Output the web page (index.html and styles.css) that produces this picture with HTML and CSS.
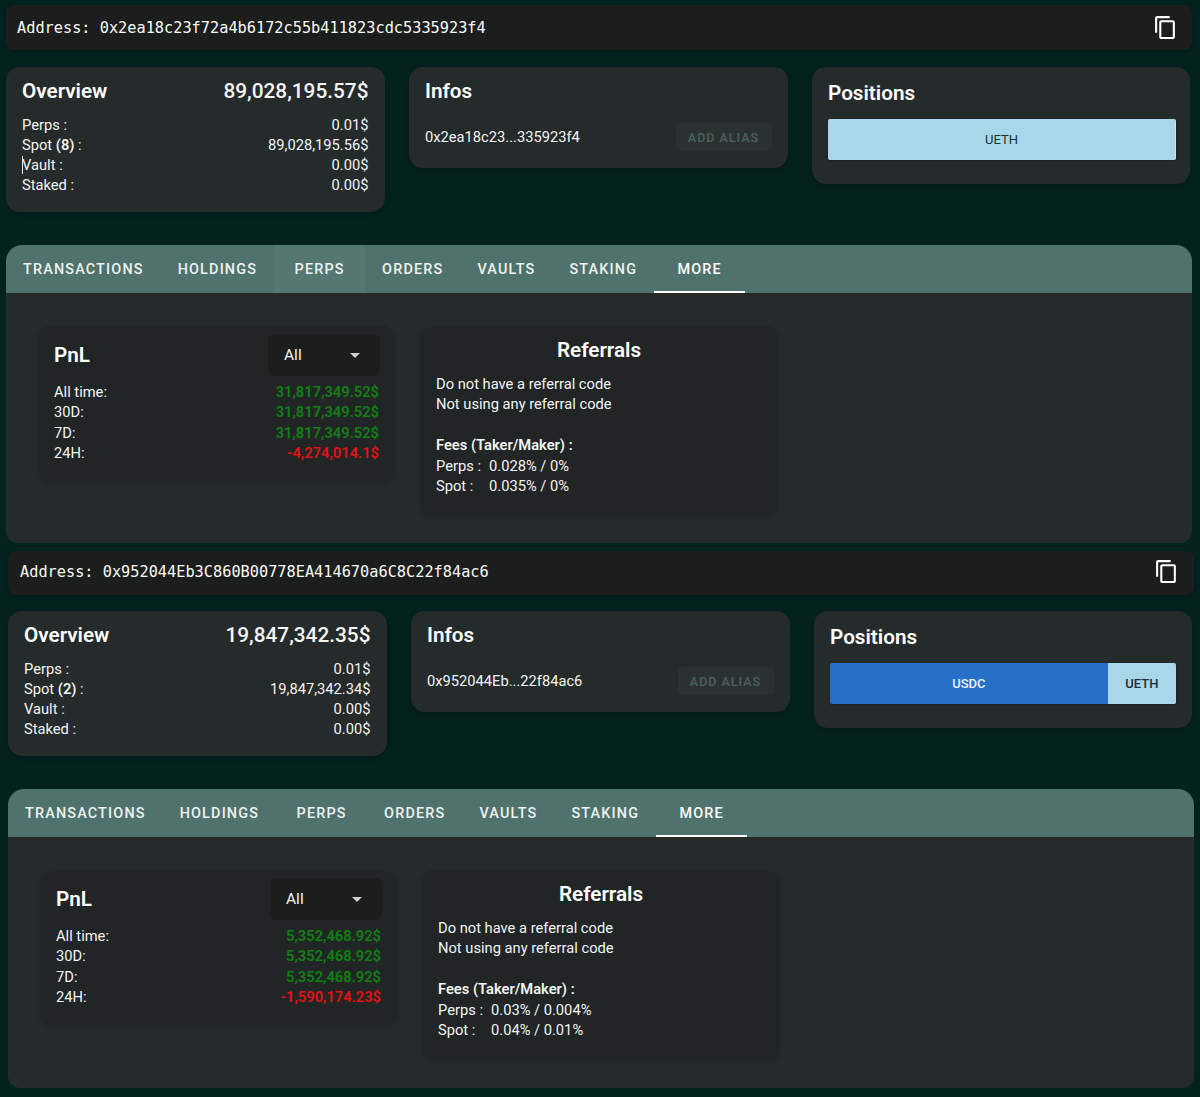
FILE: index.html
```html
<!DOCTYPE html>
<html lang="en">
<head>
<meta charset="utf-8">
<title>Wallet overview</title>
<link rel="stylesheet" href="styles.css">
</head>
<body>
<section class="wallet wallet-a">
  <div class="address">
    <span class="address-text">Address: 0x2ea18c23f72a4b6172c55b411823cdc5335923f4</span>
    <svg class="copy" viewBox="0 0 24 24"><path d="M16 1H4c-1.1 0-2 .9-2 2v14h2V3h12V1zm3 4H8c-1.1 0-2 .9-2 2v14c0 1.1.9 2 2 2h11c1.1 0 2-.9 2-2V7c0-1.1-.9-2-2-2zm0 16H8V7h11v14z"/></svg>
  </div>
  <div class="cards">
    <div class="card overview">
      <div class="head"><h2>Overview</h2><span class="total">89,028,195.57$</span></div>
      <div class="row"><span>Perps :</span><span>0.01$</span></div>
      <div class="row"><span>Spot <b>(8)</b> :</span><span>89,028,195.56$</span></div>
      <div class="row"><span><i class="caret"></i>Vault :</span><span>0.00$</span></div>
      <div class="row"><span>Staked :</span><span>0.00$</span></div>
    </div>
    <div class="card infos">
      <div class="head"><h2>Infos</h2></div>
      <div class="info-row"><span>0x2ea18c23...335923f4</span><button class="alias" disabled>ADD ALIAS</button></div>
    </div>
    <div class="card positions">
      <div class="head"><h2>Positions</h2></div>
      <div class="bar"><div class="seg ueth" style="flex:1">UETH</div><div class="seg sliver" style="width:1px"></div></div>
    </div>
  </div>
  <nav class="tabs">
    <a class="tab">Transactions</a><a class="tab">Holdings</a><a class="tab hover">Perps</a><a class="tab">Orders</a><a class="tab">Vaults</a><a class="tab">Staking</a><a class="tab active">More</a>
  </nav>
  <div class="panel">
    <div class="inner pnl">
      <div class="pnl-head"><h2>PnL</h2><div class="select"><span>All</span><i class="arrow"></i></div></div>
      <div class="line"><span>All time:</span><span class="gain">31,817,349.52$</span></div>
      <div class="line"><span>30D:</span><span class="gain">31,817,349.52$</span></div>
      <div class="line"><span>7D:</span><span class="gain">31,817,349.52$</span></div>
      <div class="line"><span>24H:</span><span class="loss">-4,274,014.1$</span></div>
    </div>
    <div class="inner referrals">
      <h2>Referrals</h2>
      <p class="line">Do not have a referral code</p>
      <p class="line">Not using any referral code</p>
      <p class="line blank"></p>
      <p class="line"><b>Fees (Taker/Maker) :</b></p>
      <p class="line"><span class="fee-label">Perps :</span>0.028% / 0%</p>
      <p class="line"><span class="fee-label">Spot :</span>0.035% / 0%</p>
    </div>
  </div>
</section>
<section class="wallet wallet-b">
  <div class="address">
    <span class="address-text">Address: 0x952044Eb3C860B00778EA414670a6C8C22f84ac6</span>
    <svg class="copy" viewBox="0 0 24 24"><path d="M16 1H4c-1.1 0-2 .9-2 2v14h2V3h12V1zm3 4H8c-1.1 0-2 .9-2 2v14c0 1.1.9 2 2 2h11c1.1 0 2-.9 2-2V7c0-1.1-.9-2-2-2zm0 16H8V7h11v14z"/></svg>
  </div>
  <div class="cards">
    <div class="card overview">
      <div class="head"><h2>Overview</h2><span class="total">19,847,342.35$</span></div>
      <div class="row"><span>Perps :</span><span>0.01$</span></div>
      <div class="row"><span>Spot <b>(2)</b> :</span><span>19,847,342.34$</span></div>
      <div class="row"><span>Vault :</span><span>0.00$</span></div>
      <div class="row"><span>Staked :</span><span>0.00$</span></div>
    </div>
    <div class="card infos">
      <div class="head"><h2>Infos</h2></div>
      <div class="info-row"><span>0x952044Eb...22f84ac6</span><button class="alias" disabled>ADD ALIAS</button></div>
    </div>
    <div class="card positions">
      <div class="head"><h2>Positions</h2></div>
      <div class="bar"><div class="seg usdc" style="flex:277">USDC</div><div class="seg ueth" style="flex:68">UETH</div></div>
    </div>
  </div>
  <nav class="tabs">
    <a class="tab">Transactions</a><a class="tab">Holdings</a><a class="tab">Perps</a><a class="tab">Orders</a><a class="tab">Vaults</a><a class="tab">Staking</a><a class="tab active">More</a>
  </nav>
  <div class="panel">
    <div class="inner pnl">
      <div class="pnl-head"><h2>PnL</h2><div class="select"><span>All</span><i class="arrow"></i></div></div>
      <div class="line"><span>All time:</span><span class="gain">5,352,468.92$</span></div>
      <div class="line"><span>30D:</span><span class="gain">5,352,468.92$</span></div>
      <div class="line"><span>7D:</span><span class="gain">5,352,468.92$</span></div>
      <div class="line"><span>24H:</span><span class="loss">-1,590,174.23$</span></div>
    </div>
    <div class="inner referrals">
      <h2>Referrals</h2>
      <p class="line">Do not have a referral code</p>
      <p class="line">Not using any referral code</p>
      <p class="line blank"></p>
      <p class="line"><b>Fees (Taker/Maker) :</b></p>
      <p class="line"><span class="fee-label">Perps :</span>0.03% / 0.004%</p>
      <p class="line"><span class="fee-label">Spot :</span>0.04% / 0.01%</p>
    </div>
  </div>
</section>
</body>
</html>
```
FILE: styles.css
```css
* { box-sizing: border-box; }
html, body { margin: 0; padding: 0; }
body {
  background: #03221e;
  color: #f2f4f3;
  font-family: Roboto, "Liberation Sans", sans-serif;
  font-size: 14.7px;
  height: 1097px;
  overflow: hidden;
}
h2 { margin: 0; font-size: 20.7px; font-weight: 600; color: #fff; }
p { margin: 0; }
b { font-weight: 600; }

.wallet { width: 1186px; }
.wallet-a { margin-left: 6px; padding-top: 5px; }
.wallet-b { margin-left: 8px; padding-top: 8px; }

.address {
  height: 45px;
  padding: 0 14px 0 11px;
  display: flex;
  align-items: center;
  justify-content: space-between;
  background: #1c1e1e;
  border-radius: 8px;
  box-shadow: 0 2px 4px rgba(0,0,0,.2);
}
.wallet-b .address { height: 44px; padding: 0 15px 3px 12px; }
.address-text {
  font-family: "DejaVu Sans Mono", monospace;
  font-size: 15.27px;
  color: #fbfbf5;
  white-space: pre;
}
.copy { width: 25px; height: 25px; fill: #fff; display: block; }

.cards {
  margin-top: 17px;
  display: grid;
  grid-template-columns: 378.5px 378.5px 378px;
  column-gap: 24.5px;
  align-items: start;
}
.wallet-b .cards { margin-top: 16px; }
.card {
  background: #252a2b;
  border-radius: 14px;
  box-shadow: 0 3px 6px rgba(0,0,0,.2);
  padding: 9px 16px 17px;
}
.head { height: 30px; display: flex; align-items: center; justify-content: space-between; margin-bottom: 9px; }
.total { font-size: 20.8px; font-weight: 500; color: #f5f5f5; }
.row { height: 20px; line-height: 20px; display: flex; justify-content: space-between; }
.caret { display: inline-block; width: 1px; height: 18px; margin-right: -1px; background: #e8e8e8; vertical-align: -4px; }

.infos { padding-bottom: 17px; }
.infos .head { margin-bottom: 17px; }
.info-row { display: flex; align-items: center; justify-content: space-between; }
.alias {
  width: 96px;
  height: 28px;
  border: 0;
  border-radius: 4px;
  background: #2b3131;
  color: #4c625f;
  font: 500 12.5px Roboto, sans-serif;
  letter-spacing: 1px;
  padding: 0;
}

.positions { padding: 11px 14px 24px 16px; }
.wallet-b .positions { padding-right: 16px; }
.positions .head { margin-bottom: 11px; }
.bar { height: 41px; display: flex; border-radius: 2px; overflow: hidden; box-shadow: 0 1px 2px rgba(0,0,0,.3); }
.seg { display: flex; align-items: center; justify-content: center; padding-bottom: 1px; font-size: 13px; }
.wallet-b .seg { font-weight: 500; }
.ueth { background: #a8d7ea; color: #1e2e38; }
.usdc { background: #2770c9; color: #eef4fb; }
.sliver { background: #d9e6c8; }

.tabs {
  margin-top: 33px;
  height: 48px;
  display: flex;
  background: #4f726d;
  border-radius: 16px 16px 0 0;
}
.tab {
  min-width: 91px;
  padding: 0 17px;
  display: flex;
  align-items: center;
  justify-content: center;
  font-size: 14.4px;
  font-weight: 500;
  letter-spacing: 1.17px;
  text-transform: uppercase;
  color: #eef2f1;
}
.tab.hover { background: #547771; }
.tab.active { color: #fff; box-shadow: inset 0 -2px 0 #fff; }

.panel {
  height: 250px;
  padding: 33px 32px 0;
  display: grid;
  grid-template-columns: 357px 358px;
  column-gap: 25px;
  align-items: start;
  background: #252a2b;
  border-radius: 0 0 12px 12px;
}
.wallet-b .panel { height: 251px; }
.inner {
  background: #212526;
  border-radius: 12px;
  box-shadow: 0 2px 6px rgba(0,0,0,.12);
}
.pnl { padding: 8px 16px 18px; }
.pnl-head { display: flex; align-items: center; justify-content: space-between; margin-bottom: 6px; }
.select {
  width: 112px;
  height: 42px;
  margin-right: -1px;
  padding: 0 20px 0 16px;
  display: flex;
  align-items: center;
  justify-content: space-between;
  background: #1c1e1e;
  border-radius: 6px;
  font-size: 15.5px;
}
.arrow { width: 0; height: 0; border-left: 5.5px solid transparent; border-right: 5.5px solid transparent; border-top: 5.5px solid #cfcfcf; }
.line { height: 20.4px; line-height: 20.4px; display: flex; justify-content: space-between; }
.gain { color: #138013; font-weight: 600; }
.loss { color: #e81010; font-weight: 600; }

.referrals { padding: 10px 16px 20px; height: 190px; }
.referrals h2 { height: 28px; line-height: 28px; text-align: center; margin-bottom: 10px; }
.referrals .line { display: block; }
.fee-label { display: inline-block; width: 53px; }
```
